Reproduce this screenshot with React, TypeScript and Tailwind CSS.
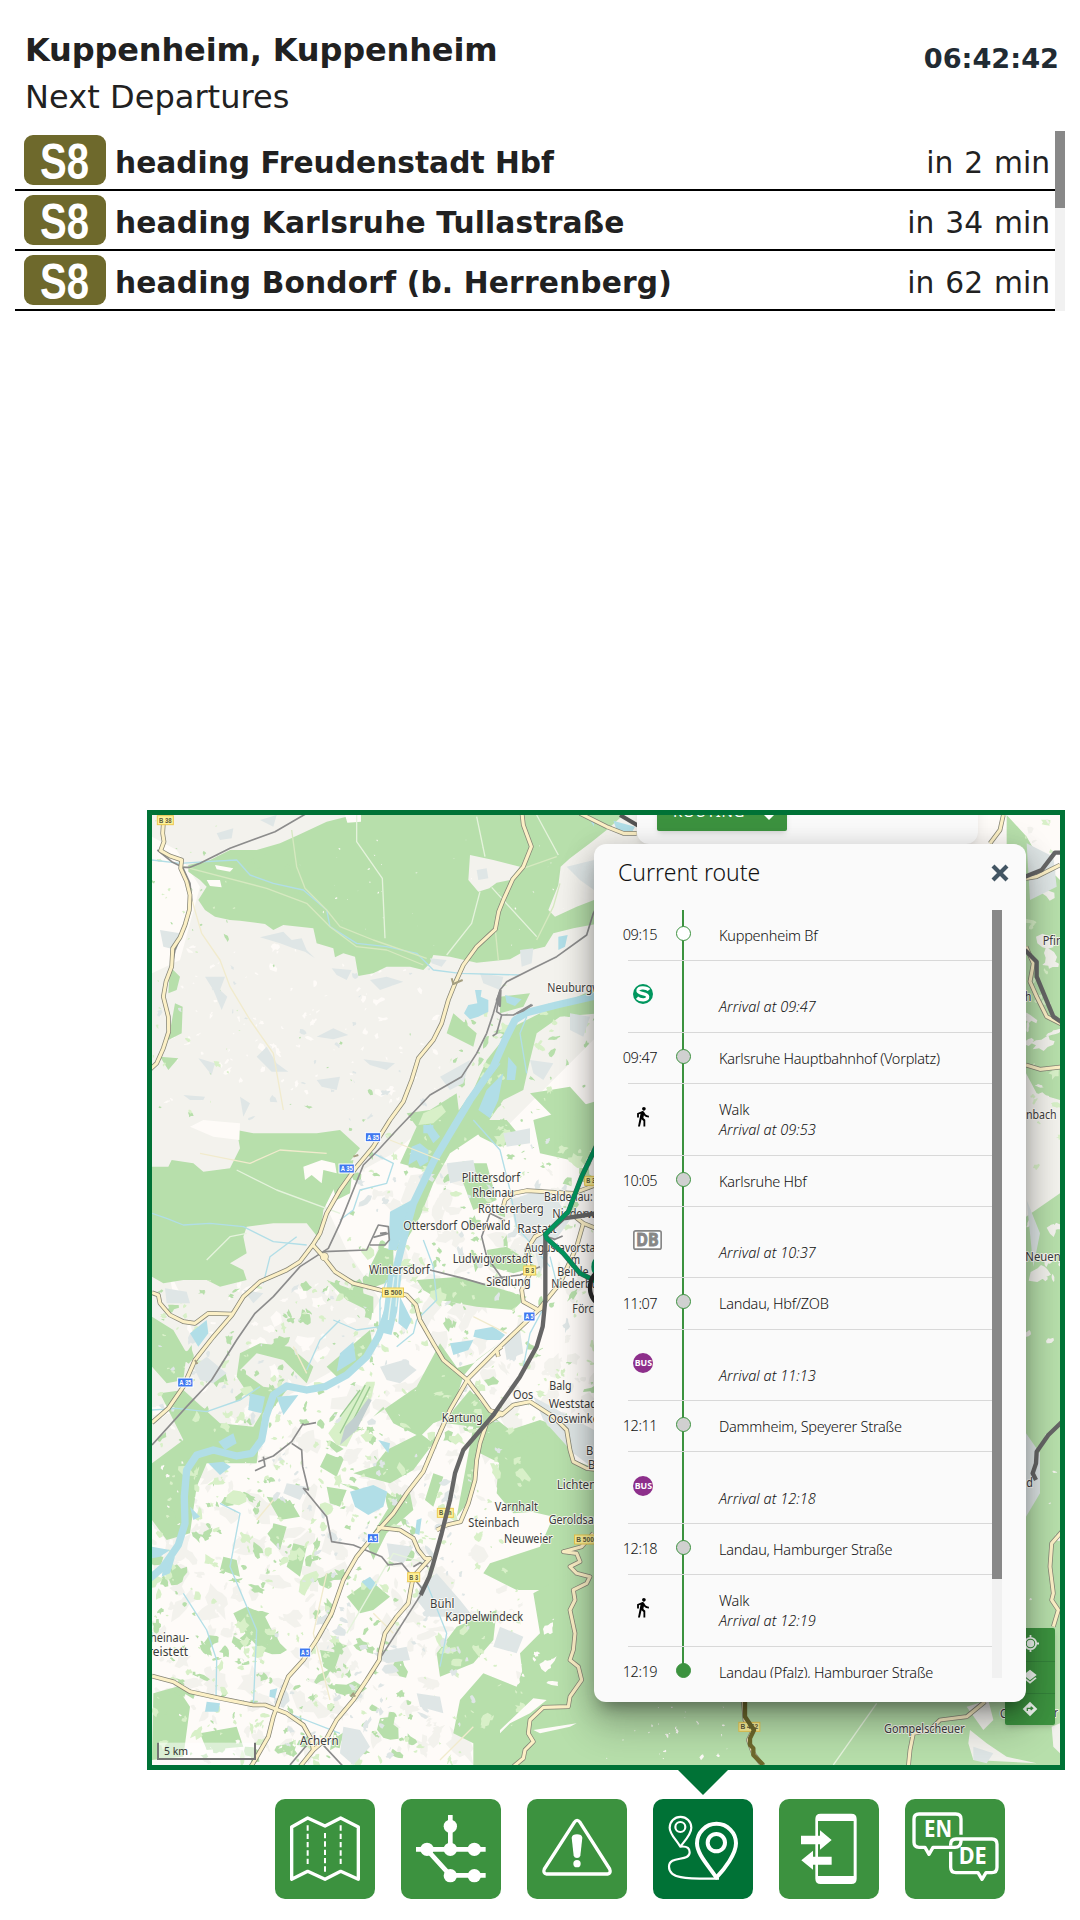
import React from "react";

const departures = [
  { line: "S8", to: "heading Freudenstadt Hbf", eta: "in 2 min", wide: false },
  { line: "S8", to: "heading Karlsruhe Tullastraße", eta: "in 34 min", wide: true },
  { line: "S8", to: "heading Bondorf (b. Herrenberg)", eta: "in 62 min", wide: true },
];

type Step =
  | { kind: "stop"; time: string; name: string; dot: "start" | "mid" | "end" }
  | { kind: "leg"; icon: "sbahn" | "walk" | "db" | "bus"; label?: string; arrival: string };

const steps: Step[] = [
  { kind: "stop", time: "09:15", name: "Kuppenheim Bf", dot: "start" },
  { kind: "leg", icon: "sbahn", arrival: "Arrival at 09:47" },
  { kind: "stop", time: "09:47", name: "Karlsruhe Hauptbahnhof (Vorplatz)", dot: "mid" },
  { kind: "leg", icon: "walk", label: "Walk", arrival: "Arrival at 09:53" },
  { kind: "stop", time: "10:05", name: "Karlsruhe Hbf", dot: "mid" },
  { kind: "leg", icon: "db", arrival: "Arrival at 10:37" },
  { kind: "stop", time: "11:07", name: "Landau, Hbf/ZOB", dot: "mid" },
  { kind: "leg", icon: "bus", arrival: "Arrival at 11:13" },
  { kind: "stop", time: "12:11", name: "Dammheim, Speyerer Straße", dot: "mid" },
  { kind: "leg", icon: "bus", arrival: "Arrival at 12:18" },
  { kind: "stop", time: "12:18", name: "Landau, Hamburger Straße", dot: "mid" },
  { kind: "leg", icon: "walk", label: "Walk", arrival: "Arrival at 12:19" },
  { kind: "stop", time: "12:19", name: "Landau (Pfalz), Hamburger Straße", dot: "end" },
];

/* ---------- Departure board ---------- */

function LineBadge({ line }: { line: string }) {
  return (
    <svg width="82" height="50" viewBox="0 0 82 50" className="shrink-0 overflow-visible">
      <rect width="82" height="50" rx="9" fill="#6e692c" />
      <text x="16" y="43.5" textLength="49" lengthAdjust="spacingAndGlyphs" fontFamily="'Liberation Sans', sans-serif" fontWeight="700" fontSize="50" fill="#fff">
        {line}
      </text>
    </svg>
  );
}

function Departures() {
  return (
    <section className="ml-[15px] flex h-[180px] w-[1050px]">
      <ul className="grow">
        {departures.map((d) => (
          <li key={d.to} className="flex h-[60px] items-center border-b-2 border-black pl-[9px] pr-[5px]">
            <LineBadge line={d.line} />
            <span className={`ml-[9px] grow pt-[6px] text-[29.7px] leading-[36px] font-bold whitespace-nowrap ${d.wide ? "tracking-[0.16px]" : "tracking-[0px]"}`}>{d.to}</span>
            <span className="pt-[6px] text-[29.7px] leading-[36px] [word-spacing:1.500px] whitespace-nowrap">{d.eta}</span>
          </li>
        ))}
      </ul>
      <div className="w-[10px] bg-[#f1f1f1]">
        <div className="h-[77px] bg-[#888]" />
      </div>
    </section>
  );
}

/* ---------- Map ---------- */

function random(seed: number) {
  let s = seed;
  return () => {
    s = (s * 16807) % 2147483647;
    return s / 2147483647;
  };
}

/** One path made of small irregular plots spread over a rectangle. */
function plots(seed: number, count: number, x0: number, y0: number, x1: number, y1: number, r0: number, r1: number) {
  const rnd = random(seed);
  let d = "";
  for (let i = 0; i < count; i++) {
    const cx = x0 + rnd() * (x1 - x0);
    const cy = y0 + rnd() * (y1 - y0);
    const r = r0 + rnd() * rnd() * (r1 - r0);
    const tilt = rnd() * Math.PI;
    const flat = 0.35 + rnd() * 0.5;
    const n = 7 + Math.floor(rnd() * 8);
    for (let k = 0; k < n; k++) {
      const a = (k / n) * Math.PI * 2;
      const q = r * (0.45 + rnd() * 0.85);
      const ex = Math.cos(a) * q;
      const ey = Math.sin(a) * q * flat;
      const px = cx + ex * Math.cos(tilt) - ey * Math.sin(tilt);
      const py = cy + ex * Math.sin(tilt) + ey * Math.cos(tilt);
      d += `${k ? "L" : "M"}${px.toFixed(0)} ${py.toFixed(0)}`;
    }
    d += "Z";
  }
  return d;
}

const FOREST = "#b7dfab";
const MEADOW = "#d8f0c8";
const TOWN = "#dfe6e6";
const PALE = "#fefbf8";
const FIELD = "#f3f2ed";
const WATER = "#b1dee7";

const rhine =
  "M1380 585L1250 615L1160 638L1125 660L1095 720L1060 800L990 900L930 1000L880 1085L820 1210L790 1320L765 1420L745 1530L715 1610L680 1670L620 1725L555 1760L500 1770L440 1758L400 1785L378 1850L365 1920L335 1960L290 1968L220 1950L170 1965L140 2010L133 2090L135 2170L115 2235L70 2300L30 2335";

const roads: string[] = [
  "M70 70L68 100L72 125L62 152L90 168L125 180L122 205L140 245L150 285L148 330L135 375L120 412L98 445L95 500L78 545L70 590L85 650L86 695L70 745L50 790L30 808",
  "M1146 40L1150 75L1174 140L1150 200L1118 238L1090 300L1076 335L1066 388L1010 440L970 495L945 550L925 600L905 670L880 720L835 775L815 840L790 905L750 960L700 1040L650 1100L600 1170L560 1240L540 1300L518 1335L480 1385L440 1410L360 1445L310 1490L276 1545L220 1610L165 1680L130 1760L85 1825L36 1868",
  "M1320 40L1400 80L1450 100L1490 100",
  "M516 1332L550 1370L585 1415L640 1450L720 1470L800 1485L828 1515L840 1560L880 1630L910 1680L982 1740L1020 1790L1050 1832L1085 1845L1120 1815L1170 1805L1240 1850L1280 1890L1290 1950L1300 1985L1340 2005L1380 2010",
  "M36 1478L55 1485L60 1510L90 1545L130 1565L165 1570L205 1540L276 1542",
  "M1330 1270L1310 1340L1260 1450L1195 1530L1080 1640L985 1735L930 1830L890 1920L850 2015L800 2080L760 2140L715 2190L650 2270L610 2340L575 2440L530 2520L490 2580L445 2630L425 2680L400 2750L385 2810L345 2880L320 2920",
  "M1120 1180L1160 1172L1230 1176L1300 1180L1380 1150",
  "M1120 1180L1095 1200L1090 1220",
  "M1222 1290L1185 1310L1160 1350L1170 1420L1145 1470L1150 1505L1195 1530L1215 1520",
  "M1280 1230L1330 1270L1380 1290",
  "M1050 1832L1085 1840L1040 1870L1020 1930L1010 1980L1005 2040L985 2110L962 2165L920 2175L890 2190",
  "M712 2182L780 2190L820 2215L835 2250L855 2275L870 2275L820 2330L812 2370L805 2410L770 2450L735 2500L720 2560L718 2580L680 2640L640 2700L590 2760L560 2815L520 2850L480 2900",
  "M36 2628L100 2645L150 2675L240 2695L340 2715L375 2715L440 2740L490 2775L515 2820L520 2850",
  "M1360 2200L1325 2240L1270 2255L1310 2260L1320 2285L1290 2300L1310 2320L1350 2330L1340 2350L1300 2370L1305 2400L1290 2430L1305 2500L1300 2550L1290 2580L1315 2600L1325 2640L1290 2690L1285 2720L1210 2722L1170 2760L1165 2800L1180 2825L1155 2850L1150 2875L1120 2900",
  "M1085 1640L1070 1650L1075 1670",
  "M2590 45L2580 90L2550 130",
  "M2658 235L2690 230L2760 195",
  "M2658 440L2680 490L2670 545L2690 590L2720 650L2770 675",
  "M2658 795L2700 808L2770 800",
  "M2770 2190L2735 2230L2730 2300L2740 2380L2735 2400L2755 2430L2740 2480",
  "M2535 2705L2480 2750L2400 2760L2370 2790L2320 2800L2310 2850L2305 2900",
  "M1810 2700L1815 2760L1840 2790L1825 2820L1840 2860L1870 2900",
];

const rails = [
  "M500 40L405 95L270 145L180 190L150 202L128 202L95 185L52 150",
  "M128 202L150 250L155 300L140 370L105 450L95 500",
  "M1380 300L1360 340L1340 405L1250 470L1180 505L1100 545L1080 570L1060 640L1040 700L1010 760L965 830L870 885L770 990L715 1050L670 1095L640 1170L600 1270L565 1345L480 1400L400 1490L345 1540L290 1620L215 1740L140 1820L36 1935",
  "M550 1355L680 1350L715 1275L745 1280L748 1320L735 1335L690 1335",
  "M870 1410L970 1435L1035 1454",
  "M1060 1435L1140 1425L1200 1400",
  "M1095 1262L1050 1240L1025 1310L1040 1370L1090 1440",
  "M490 1870L455 1925L400 1968L355 1985M345 2012L375 1998L370 1970M455 1930L485 1950L488 2000L505 2070L490 2065L560 2150L575 2225L640 2235L725 2270L745 2295L785 2290L850 2370M528 1868L490 1875",
  "M845 2380L720 2575",
  "M1075 600L1070 635L1085 645L1120 645L1178 615M1085 645L1070 700L1058 708",
  "M450 2895L505 2830M545 2830L610 2900",
  "M820 2300L840 2288L865 2300",
];

const streams = [
  "M36 180L120 190L200 185L290 180L330 225L400 250L490 270L560 330L570 380L650 430L740 440L830 460L880 510L960 520L1140 525",
  "M36 1240L80 1255L130 1275L210 1270L310 1280L400 1325L500 1335",
  "M36 1830L110 1825L200 1835L300 1800L360 1760M600 1560L540 1620L500 1710",
  "M850 1320L880 1400L890 1500L830 1560L820 1600L770 1640",
  "M740 1440L720 1500L720 1580L650 1590L580 1560",
  "M1000 960L1080 1050L1110 1170L1130 1280L1230 1400",
  "M240 2110L300 2140L270 2300L350 2490L340 2720M130 2380L200 2490L230 2580L228 2690",
  "M600 1260L640 1230L660 1170L740 1150L760 1090L700 1060M470 1310L390 1370L370 1450",
  "M1160 650L1140 700L1150 760L1160 820M1080 790L1010 880M420 2730L600 2800",
  "M860 2350L920 2500L900 2600M1230 1370L1250 1450L1170 1600L1150 1700",
];

const highlights = [
  { d: "M1380 1015L1325 1130L1285 1235L1216 1303L1220 1315L1270 1360L1320 1420L1380 1450", c: "#00965e", w: 15 },
];

type Label = [string, number, number, number];
const labels: Label[] = [
  ["Neuburgw", 1222, 577, 160],
  ["Plittersdorf", 965, 1146, 175],
  ["Rheinau", 997, 1192, 125],
  ["Röttererberg", 1014, 1240, 197],
  ["Baldenau:", 1212, 1202, 146],
  ["Niederw", 1237, 1255, 130],
  ["Ottersdorf", 790, 1290, 161],
  ["Oberwald", 962, 1290, 149],
  ["Rastatt", 1132, 1298, 118],
  ["Augustavorstadt", 1154, 1356, 242],
  ["m", 1292, 1391, 28],
  ["Beinle", 1252, 1428, 94],
  ["Niederbühl", 1234, 1463, 168],
  ["Ludwigvorstadt", 938, 1390, 239],
  ["Siedlung", 1039, 1457, 133],
  ["Wintersdorf", 687, 1422, 182],
  ["Förch", 1297, 1538, 84],
  ["Balg", 1228, 1769, 67],
  ["Oos", 1119, 1796, 61],
  ["Weststadt", 1226, 1823, 158],
  ["Ooswinkel", 1225, 1870, 160],
  ["Kartung", 905, 1867, 123],
  ["B", 1338, 1965, 22],
  ["B", 1344, 2007, 22],
  ["Lichtental", 1250, 2067, 160],
  ["Varnhalt", 1064, 2133, 130],
  ["Steinbach", 985, 2181, 153],
  ["Geroldsau", 1226, 2173, 155],
  ["Neuweier", 1092, 2229, 146],
  ["Bühl", 870, 2424, 73],
  ["Kappelwindeck", 916, 2464, 233],
  ["Rheinau-", 10, 2526, 137],
  ["Freistett", 6, 2568, 138],
  ["Achern", 480, 2835, 116],
  ["Pfin", 2708, 434, 60],
  ["h", 2655, 603, 19],
  ["nbach", 2658, 957, 92],
  ["Neuen", 2656, 1384, 106],
  ["d", 2659, 2061, 20],
  ["Gompelscheuer", 2232, 2798, 242],
  ["Ch", 2580, 2755, 40],
  ["r", 2742, 2752, 12],
];

const shields: [string, number, number, "a" | "b"][] = [
  ["B 38", 76, 60, "b"],
  ["A 35", 699, 1011, "a"],
  ["A 35", 620, 1105, "a"],
  ["A 35", 136, 1747, "a"],
  ["A 5", 1168, 1549, "a"],
  ["A 5", 699, 2214, "a"],
  ["A 5", 495, 2557, "a"],
  ["B 500", 759, 1477, "b"],
  ["B 3", 1169, 1411, "b"],
  ["B 3", 821, 2331, "b"],
  ["B 3n", 916, 2138, "b"],
  ["B 3", 1352, 1142, "b"],
  ["B 500", 1335, 2218, "b"],
  ["B 462", 1828, 2780, "b"],
];

function MapView() {
  return (
    <svg width="908" height="950" viewBox="36 45 2724 2850" className="block">
      <rect x="36" y="45" width="2724" height="2850" fill={FIELD} />

      <path fill={PALE} d="M36 110L110 150L180 260L120 480L36 520ZM540 1180L760 1060L900 940L1080 1000L1380 700V2895H36V2040L300 1940L420 1800L600 1700L720 1500L620 1350ZM2400 45H2760V500L2600 400Z" />
      <path fill={PALE} d={plots(11, 110, 60, 420, 900, 930, 3, 22)} />
      <path fill={PALE} d={plots(21, 60, 60, 1450, 760, 1950, 8, 50)} />
      <path fill={FIELD} d={plots(12, 230, 40, 1900, 900, 2890, 10, 60)} />
      <path fill={FIELD} d={plots(13, 150, 640, 1100, 1370, 2100, 10, 75)} />
      <path fill={FIELD} d={plots(14, 50, 750, 2250, 1200, 2890, 10, 70)} />

      {/* woodland */}
      <g fill={FOREST}>
        <path d="M145 195L210 180L270 150L350 150L420 130L475 105L560 65L640 45H1450L1400 90L1350 130L1290 175L1262 200L1255 255L1225 330L1245 350L1310 320L1362 300L1380 370L1300 385L1240 400L1215 440L1150 455L1110 478L1010 488L930 470L880 465L870 490L850 510L810 500L740 500L700 520L655 528L645 470L610 460L585 472L580 445L530 430L520 385L430 375L400 390L375 372L300 362L270 360L225 350L195 330L175 300L200 260L180 240L145 215Z" />
        <path d="M36 1100L85 1100L95 1080L160 1090L190 1115L270 1105L300 1045L290 990L340 1000L440 1000L530 1000L600 990L660 1045L610 1110L575 1180L550 1230L540 1320L500 1270L400 1270L320 1280L310 1310L320 1360L270 1390L310 1410L320 1440L240 1460L200 1440L130 1440L70 1450L36 1430Z" />
        <path d="M36 1550L100 1590L140 1660L130 1740L80 1750L36 1700ZM60 1780L130 1770L240 1870L340 1880L370 1830L350 1990L200 1990L170 2060L150 2200L80 2220L36 2160V1990L130 1920Z" />
        <path d="M300 1660L360 1630L450 1640L520 1700L500 1750L430 1680L350 1660L300 1710L370 1760L440 1770L380 1850L330 1790L290 1730Z" />
        <path d="M560 1700L690 1590L700 1650L600 1740ZM700 1850L830 1760L900 1630L970 1730L930 1850L880 1870L840 1910L760 1870L730 1820ZM740 1950L840 1900L880 1930L820 2010L750 2050L640 2020L700 2000Z" />
        <path d="M940 1830L990 1770L1060 1850L1110 1890L1200 1860L1290 1890L1290 2040L1350 2010L1380 2160L1250 2130L1120 2140L1070 2080L1080 1990L1020 1960L990 2100L950 2150L1000 1880L920 1870Z" />
        <path d="M1080 1960L1280 1840L1300 1980L1380 2010V2895H1000L1000 2830L940 2800L960 2700L1030 2620L1130 2660L1180 2520L1260 2600L1320 2480L1240 2370L1130 2370L1030 2320L1050 2290L1200 2240L1240 2150L1110 2120L1070 2060Z" />
        <path d="M1180 2380L1360 2280V2660L1150 2640L1140 2560L1200 2500Z" />
        <path d="M950 2480L1070 2430L1060 2520L1000 2590L900 2630L890 2560ZM40 2680L110 2660L150 2720L130 2870L36 2880ZM180 2800L290 2780L310 2840L200 2850ZM320 2420L370 2440L400 2500L370 2560L300 2480L280 2440ZM620 2390L690 2340L750 2390L700 2430L660 2440ZM680 2230L760 2100L810 2080L820 2130L740 2200L700 2280Z" />
        <path d="M800 940L870 930L950 880L960 960L900 1060L850 1110L780 1090L830 980ZM980 960L1100 960L1150 1020L1080 1040L1020 1010ZM1040 780L1120 680L1200 640L1290 600L1380 560V640L1260 650L1190 700L1170 780L1150 870L1090 900L1020 1000L930 1060L880 1150L840 1250L800 1320L830 1170L900 1010L1000 870Z" />
        <path d="M1180 960L1380 900V1040L1290 1080L1200 1060ZM960 1090L1040 1090L1070 1200L1000 1230L970 1150ZM1170 880L1290 860L1380 960L1240 950ZM720 1340L760 1350L760 1440L680 1470L690 1400ZM830 1440L960 1430L1060 1460L1160 1490L1120 1530L1010 1520L900 1500L850 1470ZM880 1660L930 1710L1000 1690L1090 1620L1010 1680L960 1740Z" />
        <path d="M90 500L120 530L110 570L85 580ZM105 610L128 620L125 700L85 720ZM60 770L115 775L85 810ZM1080 590L1170 580L1150 620L1080 640ZM940 640L1010 700L1000 740L920 700Z" />
        <path d="M2600 45L2660 110L2700 180L2760 240V900L2690 880L2658 820V1250L2760 1180V2895H1350V2700H2658V600L2600 400Z" />
        <path d="M1040 1350L1100 1340L1190 1400L1120 1420L1050 1400ZM560 1100L640 1080L630 1180L590 1200Z" />
        <path d="M380 2090L450 2100L480 2150L420 2160ZM560 2060L620 2070L600 2120L570 2110ZM460 2230L500 2240L480 2330L440 2300ZM250 2270L290 2280L300 2330L240 2310ZM880 2020L910 2030L880 2120L855 2100ZM560 1960L610 1980L590 2030L540 2000ZM400 2170L440 2180L420 2250L390 2220ZM690 2090L650 2060L600 2050ZM540 2550L600 2560L580 2620L550 2600ZM560 1440L640 1470L700 1490L700 1540L620 1500Z" />
      </g>
      <path fill={FOREST} d={plots(31, 190, 40, 2000, 820, 2890, 5, 42)} />
      <path fill={FOREST} d={plots(32, 130, 620, 960, 1370, 1920, 4, 36)} />
      <path fill={FOREST} d={plots(33, 70, 60, 1440, 720, 1990, 5, 44)} />
      <path fill={FOREST} d={plots(34, 26, 40, 90, 480, 420, 3, 14)} />
      <path fill={FOREST} d={plots(35, 60, 900, 620, 1370, 1100, 4, 28)} />
      <path fill={FOREST} d={plots(36, 16, 60, 480, 900, 1080, 3, 15)} />

      <g fill={MEADOW}>
        <path d={plots(41, 280, 40, 1980, 1150, 2890, 4, 34)} />
        <path d={plots(42, 150, 620, 960, 1370, 1980, 4, 30)} />
        <path d={plots(43, 70, 60, 1440, 720, 1960, 4, 30)} />
        <path d={plots(44, 26, 40, 60, 300, 960, 3, 15)} />
        <path d={plots(45, 26, 900, 520, 1370, 1000, 4, 28)} />
        <path d={plots(46, 24, 2658, 60, 2760, 1100, 5, 24)} />
        <path d="M850 940L905 915L918 935L880 970L835 975ZM565 1900L680 1745L705 1745L695 1790L620 1940L590 1935Z" />
      </g>

      {/* clearings */}
      <path fill={FIELD} d="M990 165L1060 180L1140 200L1110 240L1070 248L1048 265L1015 275L985 240Z" />
      <path fill={PALE} d="M200 240L240 240L245 262L210 258ZM225 195L280 205L270 215L230 208ZM490 1100L545 1080L585 1090L590 1120L550 1110L545 1150L515 1125L495 1140ZM615 45H663V65L622 68ZM1080 2790L1180 2695L1220 2700L1170 2740L1110 2770L1080 2800ZM1180 2790L1310 2770L1290 2780L1200 2800ZM150 980L190 960L245 965L300 970L298 1020L220 1010Z" />
      <path fill={FIELD} d={plots(51, 34, 2658, 60, 2760, 1500, 8, 52)} />
      <path fill={FIELD} d={plots(54, 8, 2658, 1500, 2760, 2500, 4, 20)} />
      <path fill={FIELD} d="M2480 2720L2545 2700L2560 2760L2530 2790ZM2490 2790L2540 2830L2600 2870L2690 2890L2500 2880L2485 2830ZM2735 2780L2760 2770V2860L2740 2840Z" />
      <path fill={PALE} d={plots(52, 24, 1060, 2420, 1240, 2660, 4, 26)} />
      <path fill={PALE} d={plots(53, 26, 1400, 2720, 1780, 2880, 2, 10)} />
      <path fill={PALE} d={plots(55, 40, 480, 120, 1280, 440, 1, 5)} />
      <path fill={PALE} d={plots(56, 130, 60, 1980, 900, 2880, 2, 14)} />
      <path fill={PALE} d={plots(57, 50, 640, 1000, 1360, 1900, 2, 12)} />

      {/* built-up areas */}
      <g fill={TOWN}>
        <path d="M360 412L430 395L455 420L485 415L500 450L525 475L495 455L460 445L420 430ZM195 530L255 530L240 570L262 590L245 630L220 570ZM690 540L740 530L790 545L720 570ZM575 505L635 510L620 540L590 525ZM530 710L580 685L625 705L580 718ZM670 778L765 790L740 810L690 795ZM530 840L600 830L590 870L545 860ZM350 770L380 740L410 790L445 815L395 815ZM175 775L225 790L215 825ZM130 885L195 890L190 900L150 900ZM300 890L330 910L310 950ZM230 100L280 85L275 115L240 120ZM360 60L410 45L400 80ZM60 390L120 400L110 450L70 440ZM1010 210L1040 205L1045 235L1015 240ZM870 475L920 480L905 500L875 490ZM1140 450L1180 445L1175 490L1145 500Z" />
        <path d="M1170 1180L1240 1180L1290 1260L1240 1330L1200 1420L1180 1330L1130 1300L1110 1200ZM920 1090L1000 1080L1010 1130L930 1150ZM1090 1000L1170 985L1170 1030L1100 1040ZM75 1465L140 1475L150 1510L80 1510ZM160 1700L200 1670L260 1720L220 1750L180 1740ZM720 1700L790 1680L830 1710L780 1750L740 1740ZM310 1470L370 1480L340 1510ZM1090 1620L1140 1590L1150 1660L1100 1680ZM1180 1790L1380 1900V2020L1300 1960L1210 1860ZM840 2360L890 2320L960 2400L1000 2450L870 2450L830 2400ZM740 2230L820 2240L790 2290L750 2280ZM610 2780L660 2790L690 2840L640 2895L600 2860ZM700 2560L800 2540L810 2580L740 2590ZM830 2680L900 2690L910 2740L840 2720ZM1080 2480L1150 2510L1130 2560L1060 2540ZM440 2050L500 2060L480 2100L430 2080ZM1170 780L1240 790L1210 840L1180 820ZM900 830L990 780L970 850L930 870ZM1290 640L1350 650L1330 710L1290 690ZM1020 520L1090 530L1080 570L1030 550Z" />
        <path d="M1280 200L1362 180V270L1320 240ZM2660 130L2740 170L2750 260L2670 300ZM2660 1200L2700 1300L2680 1400ZM2658 1900L2700 1960L2700 2080L2658 2150ZM2500 2840L2560 2860L2540 2890L2500 2880Z" />
        <path d={plots(61, 110, 400, 1960, 1000, 2870, 5, 30)} />
        <path d={plots(62, 44, 660, 1000, 1370, 1950, 5, 30)} />
        <path d={plots(63, 26, 60, 500, 900, 980, 4, 18)} />
        <path d={plots(64, 30, 60, 1450, 720, 1900, 5, 28)} />
      </g>

      {/* airfield */}
      <path d="M676 1755L600 1900M690 1760L625 1890M600 1850L660 1770" stroke="#9ccb93" strokeWidth="4" fill="none" />
      <path d="M685 1795L695 1800L665 1860L650 1890L600 1935L615 1880L645 1850Z" fill="#c2cfcf" />

      {/* water */}
      <g fill={WATER}>
        <path d="M1005 570L1025 570L1022 590L1045 600L1045 635L1015 650L990 658L972 640L985 615L1012 610ZM1095 585L1145 598L1125 618L1100 608ZM1255 410L1283 405L1275 440L1255 450ZM1105 770L1130 800L1125 840L1100 840ZM1040 870L1090 820L1075 900L1050 955L1015 930ZM850 975L880 975L880 1000L850 1000Z" />
        <path d="M840 1030L865 1050L865 1085L840 1100L830 1080L805 1095L815 1040ZM870 970L900 1010L880 1030L862 1000ZM750 1235L825 1195L820 1240L790 1290L770 1350L745 1350ZM640 1625L648 1680L590 1715L600 1660ZM930 1630L1000 1620L985 1650L940 1665ZM1005 1590L1060 1580L1095 1605L1080 1620L1040 1620L1000 1610ZM150 1600L200 1560L205 1600L175 1640ZM410 1790L475 1785L430 1845ZM330 1780L375 1790L365 1840L325 1830ZM780 1490L815 1560L800 1590L775 1570ZM235 1925L280 1900L290 1930L255 1950Z" />
        <path d="M630 2075L700 2055L742 2075L730 2120L685 2145L645 2120ZM830 2160L845 2155L838 2205L825 2200ZM665 2345L690 2330L712 2355L690 2370ZM205 1990L250 1985L272 2000L240 2025ZM150 2120L180 2150L160 2160ZM36 2240L90 2250L60 2270L36 2275ZM70 2300L105 2270L90 2320L65 2330ZM390 2670L412 2665L405 2695L388 2690ZM200 2705L240 2710L235 2735L195 2735ZM715 1920L750 1930L745 1960ZM1350 60L1362 60V80Z" />
        <path d="M1420 62L1485 80L1475 98L1430 90Z" />
      </g>
      <path d={rhine} fill="none" stroke={WATER} strokeWidth="22" strokeLinejoin="round" />
      <path d="M765 1420L752 1530L735 1600" stroke={WATER} strokeWidth="40" fill="none" />
      <path d="M762 1430L745 1560M775 1420L768 1520" stroke="#e6f4ee" strokeWidth="4" fill="none" />
      {streams.map((d) => (
        <path key={d} d={d} fill="none" stroke={WATER} strokeWidth="4" strokeLinejoin="round" />
      ))}

      {/* minor roads */}
      <g fill="none" strokeWidth="4" strokeLinejoin="round">
        <path stroke="#d6e9c0" d="M455 90L470 200L495 265L560 330L600 380L700 420L860 475M130 200L380 265L500 310L570 380L650 440L740 450L850 495M1250 170L1150 205M1260 250L1240 320L1190 420M1066 390L1075 480" />
        <path stroke="#e5f3dc" d="M650 45V125L727 235L735 415M1010 50L1035 170M1020 275L995 370L920 465M1055 262L1190 410M290 1110L410 1170L600 1240M200 1380L270 1310L320 1300M1190 45L1255 165M2210 2710L2080 2895M860 2290L760 2260L620 2500" />
        <path stroke="#f1ebcd" d="M150 280L185 400L240 480L270 560L330 660L400 760L430 930M180 1060L330 1090L420 1050L560 1060M750 1020L900 1080M1000 1550L1100 1600M460 1640L500 1720M560 2320L520 2500L570 2700M400 2100L350 2160M700 2440L760 2500M900 2880L1000 2780" />
      </g>

      {/* railways and trunk roads */}
      {rails.map((d) => (
        <path key={d} d={d} fill="none" stroke="#8c8c8c" strokeWidth="5" strokeLinejoin="round" />
      ))}
      <path d="M1070 600L1082 570L1080 620ZM1130 640L1175 614L1150 632Z" fill="#8c8c8c" stroke="#8c8c8c" strokeWidth="6" />
      <path d="M700 1312L745 1300M720 1300L740 1298" stroke="#8c8c8c" strokeWidth="5" />
      <g fill="none" strokeLinejoin="round">
        {roads.map((d) => (
          <path key={d} d={d} stroke="#858475" strokeWidth="14" />
        ))}
        <circle cx="553" cy="1370" r="13" fill="#858475" />
        {roads.map((d) => (
          <path key={d} d={d} stroke="#fcf0c6" strokeWidth="9.5" />
        ))}
        <circle cx="553" cy="1370" r="11" fill="#fcf0c6" />
        <path d="M935 535L940 552L968 540M165 1680L172 1692M640 1070L655 1065M632 2690L640 2680L645 2690" stroke="#a59f80" strokeWidth="6" />
      </g>

      {/* place names */}
      <g fontFamily="'Noto Sans', sans-serif" fontSize="38" fill="#3c3c3c" stroke="#fffdf8" strokeWidth="6" strokeOpacity="0.85" paintOrder="stroke" strokeLinejoin="round">
        {labels.map(([t, x, y, w]) => (
          <text key={t + x + y} x={x} y={y} textLength={w} lengthAdjust="spacingAndGlyphs">
            {t}
          </text>
        ))}
      </g>
      {shields.map(([t, x, y, kind]) => {
        const w = kind === "a" ? (t.length > 3 ? 46 : 34) : t.length > 4 ? 63 : t.length > 3 ? 48 : 36;
        return (
          <g key={t + x + y}>
            <rect x={x - w / 2} y={y - 13} width={w} height="27" fill={kind === "a" ? "#3f78f0" : "#fdf29a"} stroke={kind === "a" ? "#fff" : "#ecc94f"} strokeWidth="3" />
            <text x={x} y={y + 8} textAnchor="middle" textLength={w - 10} lengthAdjust="spacingAndGlyphs" fontFamily="'Liberation Sans', sans-serif" fontWeight="700" fontSize="24" fill={kind === "a" ? "#fff" : "#5d5a3c"}>
              {t}
            </text>
          </g>
        );
      })}

      {/* transit lines */}
      <g fill="none" strokeLinejoin="round">
        <path d="M1380 1238L1320 1248L1270 1255L1216 1305V1500L1208 1580L1190 1640L1140 1730L1060 1845L970 1950L945 2020L930 2100L905 2200L880 2290L868 2330L842 2385" stroke="#666" strokeWidth="13" />
        <path d="M1220 1310L1245 1318L1268 1308" stroke="#888" strokeWidth="5" />
        {highlights.map((h) => (
          <g key={h.d}>
            <path d={h.d} stroke="#3d6e5c" strokeWidth={h.w} />
            <path d={h.d} stroke={h.c} strokeWidth={h.w - 3} />
          </g>
        ))}
        <ellipse cx="1372" cy="1400" rx="18" ry="28" fill="#00965e" />
        <ellipse cx="1390" cy="1463" rx="40" ry="52" stroke="#2b2b2b" strokeWidth="13" />
        <path d="M1440 45L1500 80" stroke="#555" strokeWidth="12" />
        <path d="M2770 158H2745L2705 210L2655 230M2655 450L2690 485V530L2740 650L2770 670M2770 1862L2725 1905L2690 1955L2688 1990L2678 2020L2688 2040" stroke="#666" strokeWidth="13" />
        <path d="M1815 2700V2750L1842 2790L1830 2815V2835L1840 2845V2865L1870 2895" stroke="#6e692c" strokeWidth="13" />
      </g>

      {/* scale */}
      <rect x="52" y="2828" width="295" height="50" fill="#fff" fillOpacity="0.5" />
      <path d="M54 2828V2877H345V2828" fill="none" stroke="#757575" strokeWidth="6" />
      <text x="72" y="2865" textLength="72" lengthAdjust="spacingAndGlyphs" fontFamily="'Noto Sans', sans-serif" fontSize="34" fill="#333">
        5 km
      </text>
    </svg>
  );
}

/* ---------- Route panel ---------- */

function LegIcon({ icon }: { icon: "sbahn" | "walk" | "db" | "bus" }) {
  if (icon === "sbahn")
    return (
      <svg width="20" height="20" viewBox="0 0 60 60">
        <circle cx="30" cy="30" r="30" fill="#00965e" />
        <path d="M48 18C40 9 13 9 15 21C17 31 43 27 44 38C45 50 22 50 12 41" fill="none" stroke="#fff" strokeWidth="10" />
      </svg>
    );
  if (icon === "walk")
    return (
      <svg width="20" height="20" viewBox="2.5 1.5 20 22" fill="#000">
        <path d="M13.5 5.5c1.1 0 2-.9 2-2s-.9-2-2-2-2 .9-2 2 .9 2 2 2zM9.8 8.9L7 23h2.1l1.8-8 2.1 2v6h2v-7.5l-2.1-2 .6-3C14.8 12 16.8 13 19 13v-2c-1.900 0-3.500-1-4.300-2.400l-1-1.600c-.4-.6-1-1-1.700-1-.3 0-.5.1-.8.1L6 8.300V13h2V9.600l1.800-.7" />
      </svg>
    );
  if (icon === "db")
    return (
      <svg width="29" height="20" viewBox="0 0 87 60" className="shrink-0">
        <rect x="2.500" y="2.500" width="82" height="55" rx="6" fill="#fff" stroke="#878787" strokeWidth="5" />
        <text x="10" y="48" textLength="67" lengthAdjust="spacingAndGlyphs" fontFamily="'Noto Sans', sans-serif" fontWeight="700" fontSize="51" fill="#878787" stroke="#878787" strokeWidth="2.500">
          DB
        </text>
      </svg>
    );
  return (
    <svg width="20" height="20" viewBox="0 0 60 60">
      <circle cx="30" cy="30" r="30" fill="#8d2f8b" />
      <text x="5" y="40" textLength="52" lengthAdjust="spacingAndGlyphs" fontFamily="'Noto Sans', sans-serif" fontWeight="700" fontSize="27" fill="#fff">
        BUS
      </text>
    </svg>
  );
}

function StepRow({ step, last }: { step: Step; last: boolean }) {
  const stop = step.kind === "stop";
  return (
    <li className={`relative flex shrink-0 items-center ${stop ? "h-[51.2px]" : "h-[71.6px]"}`}>
      <div className={`flex w-[40px] shrink-0 ${stop ? "mt-[-1px] justify-end pr-[1px]" : "mt-[-5px] justify-start pl-[15px]"}`}>
        {stop ? <span className="text-[14.5px] tracking-[-0.5px] whitespace-nowrap">{step.time}</span> : <LegIcon icon={step.icon} />}
      </div>
      <div className="relative flex w-[60px] shrink-0 items-center self-stretch pl-[17px]">
        <div className={`absolute top-0 left-[24px] w-[2px] bg-[#3c923f] ${last ? "h-1/2" : "h-full"}`} />
        {step.kind === "stop" && (
          <div
            className={`relative mt-[-4px] ml-[0.500px] size-[15px] rounded-full border border-[#3c923f] ${
              step.dot === "start" ? "bg-white" : step.dot === "end" ? "bg-[#3c923f]" : "bg-[#d0d0d0]"
            }`}
          />
        )}
      </div>
      <div className="mt-[-1px] pl-[1px] leading-5 whitespace-nowrap">
        {step.kind === "stop" ? (
          <div className="text-[14.5px] tracking-[-0.24px]">{step.name}</div>
        ) : (
          <>
            <div className="h-5 text-[14.5px] tracking-[-0.2px]">{step.label}</div>
            <div className="text-[14.5px] tracking-[0.05px] italic">{step.arrival}</div>
          </>
        )}
      </div>
      {!last && <div className="absolute right-0 bottom-0 left-[10px] h-px bg-[#d8d8d8]" />}
    </li>
  );
}

function RoutePanel() {
  return (
    <aside className="flex h-[858px] w-[432px] flex-col rounded-[12px] bg-[#fafafa] px-[24px] pb-[24px] font-['Noto_Sans',sans-serif] font-light text-[#111] shadow-[0_11px_15px_-7px_rgba(0,0,0,0.3),0_24px_38px_3px_rgba(0,0,0,0.2),0_6px_30px_2px_rgba(0,0,0,0.18)]">
      <header className="flex h-[66px] shrink-0 justify-between">
        <h2 className="pt-[12px] text-[23px] leading-[32px]">Current route</h2>
        <svg width="18" height="18" viewBox="0 0 18 18" className="mt-[20px] mr-[-7px]">
          <path d="M2 2L16 16M16 2L2 16" stroke="#425563" strokeWidth="4.200" />
        </svg>
      </header>
      <div className="flex h-[768px] overflow-hidden">
        <ul className="flex grow flex-col">
          {steps.map((s, i) => (
            <StepRow key={i} step={s} last={i === steps.length - 1} />
          ))}
        </ul>
        <div className="w-[10px] shrink-0 bg-[#f1f1f1]">
          <div className="h-[669px] bg-[#888]" />
        </div>
      </div>
    </aside>
  );
}

function MapControls() {
  return (
    <div className="flex h-[97px] w-[50px] flex-col divide-y divide-[#33823a] rounded-[2px] bg-[#3c923f] shadow-md">
      <div className="flex grow items-center justify-center pb-[2px]">
        <svg width="17" height="17" viewBox="0 0 24 24" fill="none" stroke="#f4faf4" strokeWidth="2.500">
          <circle cx="12" cy="12" r="8" />
          <circle cx="12" cy="12" r="4" fill="#f4faf4" />
          <path d="M12 0v4M12 20v4M0 12h4M20 12h4" />
        </svg>
      </div>
      <div className="flex grow items-center justify-center pb-[2px]">
        <svg width="16" height="16" viewBox="0 0 24 24" fill="#f4faf4">
          <path d="M12 1L22 9L12 17L2 9ZM2 14L4 12.500L12 18.800L20 12.500L22 14L12 22Z" />
        </svg>
      </div>
      <div className="flex grow items-center justify-center pb-[1px]">
        <svg width="16" height="16" viewBox="0 0 24 24">
          <path d="M12 1L23 12L12 23L1 12Z" fill="#f4faf4" />
          <path d="M8 15V11H15M13 8.500L16 11L13 13.500" fill="none" stroke="#3c923f" strokeWidth="2" />
        </svg>
      </div>
    </div>
  );
}

/* ---------- Navigation ---------- */

const nav = ["map", "network", "alerts", "route", "phone", "language"] as const;

function NavIcon({ name }: { name: (typeof nav)[number] }) {
  return (
    <svg width="100" height="100" viewBox="0 0 300 300" fill="none" stroke="#fff" strokeLinejoin="round">
      {name === "map" && (
        <>
          <path d="M50 84L98 57L150 81L197 57L250 84V241L197 217L150 241L98 217L50 241Z" strokeWidth="10" />
          <path d="M98 79V199M197 79V199M150 102V222" strokeWidth="6" strokeDasharray="16 9" />
        </>
      )}
      {name === "network" && (
        <>
          <path d="M45 151H254M148 48V151M77 151L148 229H254" strokeWidth="14" />
          <g fill="#fff" stroke="none">
            <circle cx="148" cy="82" r="20" />
            <circle cx="78" cy="151" r="20" />
            <circle cx="148" cy="151" r="20" />
            <circle cx="220" cy="151" r="20" />
            <circle cx="148" cy="230" r="20" />
            <circle cx="220" cy="230" r="20" />
          </g>
        </>
      )}
      {name === "alerts" && (
        <>
          <path d="M142 70Q150 58 159 70L248 210Q253 223 242 225H59Q47 223 52 210Z" strokeWidth="10" />
          <path d="M134 116Q136 106 150 106Q164 106 166 116L160 170Q158 177 150 177Q142 177 140 170Z" fill="#fff" stroke="none" />
          <circle cx="150" cy="194" r="11" fill="#fff" stroke="none" />
        </>
      )}
      {name === "route" && (
        <>
          <path d="M190 236C165 198 132 165 132 133A58 58 0 0 1 249 133C249 165 215 210 190 236Z" strokeWidth="12" />
          <circle cx="190" cy="131" r="26" strokeWidth="12" />
          <path d="M82 143C68 120 50 105 50 86A32 32 0 0 1 115 86C115 105 98 122 82 143C105 140 110 150 110 160C110 190 48 168 48 203C48 238 95 240 190 239H198" strokeWidth="6.500" />
          <circle cx="82" cy="84" r="15" strokeWidth="6.500" />
        </>
      )}
      {name === "phone" && (
        <>
          <path d="M109 60Q109 44 125 44H217Q233 44 233 60V239Q233 255 217 255H125Q109 255 109 239ZM117 66V231H224V66Z" fill="#fff" stroke="none" fillRule="evenodd" />
          <path d="M66 110H123V94L158 123L123 152V136H66ZM158 173H102V155L67 184L102 212V197H158Z" fill="#fff" stroke="none" />
        </>
      )}
      {name === "language" && (
        <>
          <path d="M168 107V60Q168 45 152 45H42Q27 45 27 60V130Q27 145 42 145H60L72 166L84 145H150Q166 145 168 128V120" strokeWidth="10" />
          <path d="M137 158V205Q137 221 153 221H219L231 241L243 221H261Q276 221 276 205V136Q276 120 261 120H153Q137 120 137 136V140" strokeWidth="10" />
          <g fontFamily="'Noto Sans', sans-serif" fontWeight="700" fill="#fff" stroke="none" fontSize="69">
            <text x="57" y="114" textLength="84" lengthAdjust="spacingAndGlyphs">EN</text>
            <text x="161" y="195" textLength="84" lengthAdjust="spacingAndGlyphs">DE</text>
          </g>
        </>
      )}
    </svg>
  );
}

export default function App() {
  return (
    <div className="flex h-[1920px] w-[1080px] flex-col overflow-hidden bg-white font-['DejaVu_Sans',sans-serif] text-[#212121]">
      <header className="flex h-[131px] shrink-0 justify-between pr-[21px] pl-[25px]">
        <div>
          <h1 className="pt-[30px] text-[32px] leading-[40px] font-bold tracking-[-0.14px] whitespace-nowrap">Kuppenheim, Kuppenheim</h1>
          <p className="pt-[7px] text-[32px] leading-[40px] tracking-[0.05px]">Next Departures</p>
        </div>
        <time className="pt-[39px] text-[27.2px] leading-[40px] font-bold text-[#212b33]">06:42:42</time>
      </header>

      <Departures />

      <main className="relative mt-[499px] ml-[147px] h-[960px] w-[918px] shrink-0 border-[5px] border-[#007236]">
        <div className="relative h-full overflow-hidden">
          <MapView />
          <div className="absolute top-[-60px] left-[485px] flex h-[89px] w-[341px] items-end rounded-[12px] bg-[#fafafa] pb-[13px] pl-[20px] shadow-lg">
            <button className="flex h-[36px] w-[130px] items-center rounded-[2px] bg-[#3c923f] pb-[3px] pl-[16px] font-['Noto_Sans',sans-serif] text-[15px] tracking-[0.6px] text-white shadow-md">
              ROUTING
              <svg width="14" height="14" viewBox="0 0 14 14" className="mt-[3px] ml-[17px] shrink-0">
                <path d="M0 7L7 0L14 7L7 14Z" fill="#fff" />
              </svg>
            </button>
          </div>
          <div className="absolute top-[813px] left-[853px]">
            <MapControls />
          </div>
          <div className="absolute top-[29px] left-[442px]">
            <RoutePanel />
          </div>
        </div>
        <div className="absolute top-[955px] left-[526px] size-0 border-x-[25px] border-t-[25px] border-x-transparent border-t-[#007236]" />
      </main>

      <nav className="mt-[29px] ml-[275px] flex shrink-0 gap-[26px]">
        {nav.map((n) => (
          <button key={n} aria-label={n} className={`size-[100px] overflow-hidden rounded-[10px] ${n === "route" ? "bg-[#007236]" : "bg-[#3c923f]"}`}>
            <NavIcon name={n} />
          </button>
        ))}
      </nav>
    </div>
  );
}
